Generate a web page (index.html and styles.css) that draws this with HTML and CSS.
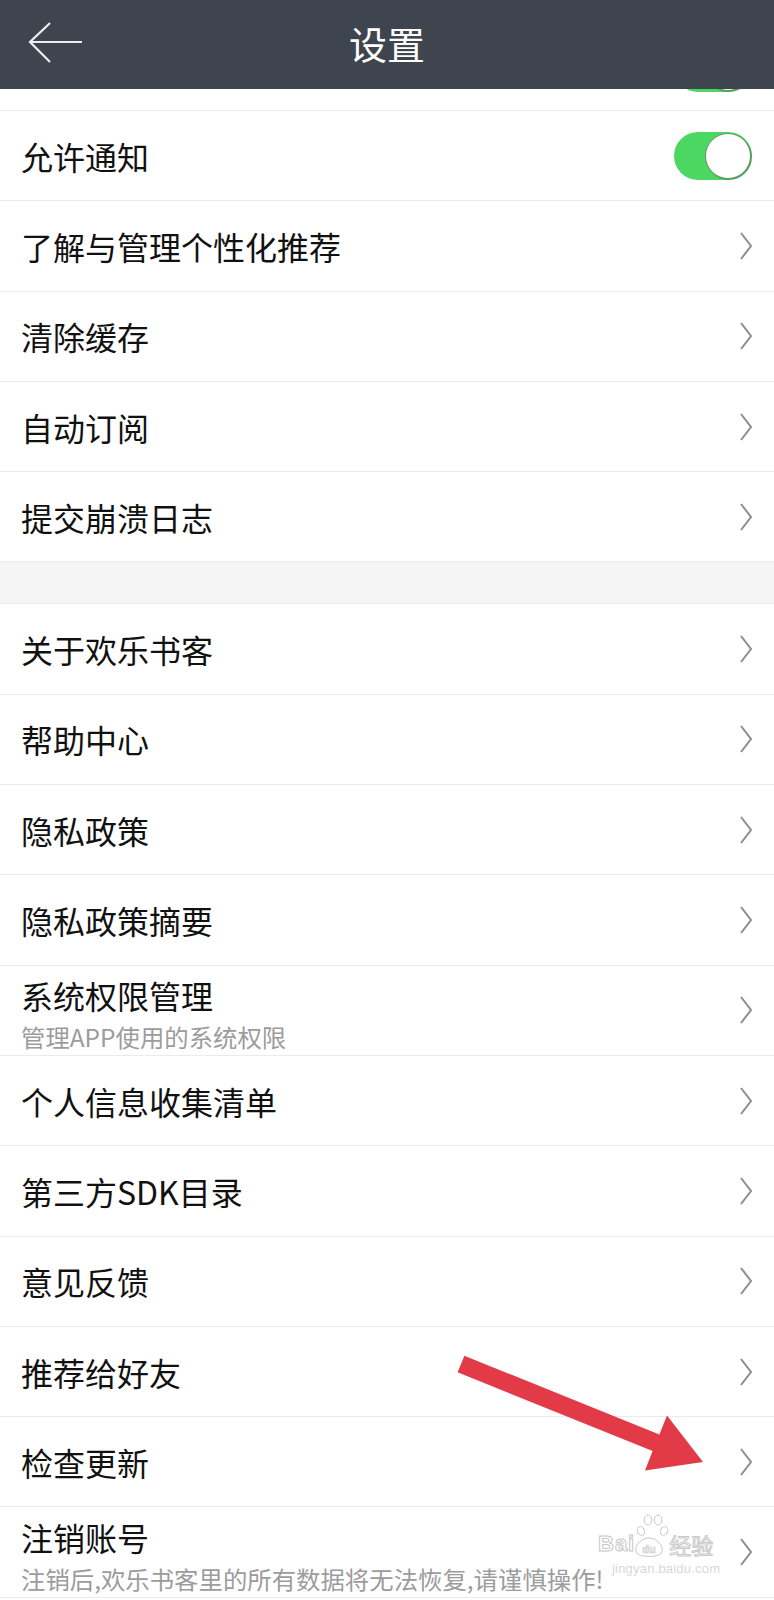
FILE: index.html
```html
<!DOCTYPE html>
<html>
<head>
    <meta charset="utf-8">
    <title>设置</title>
    <link rel="stylesheet" href="styles.css">
</head>
<body>
    <svg class="defs" width="0" height="0">
        <symbol id="chev" viewBox="0 0 14 28">
            <path d="M2 1 L12 14 L2 27" />
        </symbol>
    </svg>

    <header class="topbar">
        <svg class="back" width="56" height="42" viewBox="0 0 56 42">
            <path d="M22 1 L2 20 L22 40 M2 20 H54" />
        </svg>
        <h1>设置</h1>
        <span></span>
    </header>

    <ul class="list">
        <li class="item item--cut"><span></span><span class="switch"></span></li>
        <li class="item"><span class="label">允许通知</span><span class="switch"></span></li>
        <li class="item"><span class="label">了解与管理个性化推荐</span><svg class="chev"><use href="#chev"/></svg></li>
        <li class="item"><span class="label">清除缓存</span><svg class="chev"><use href="#chev"/></svg></li>
        <li class="item"><span class="label">自动订阅</span><svg class="chev"><use href="#chev"/></svg></li>
        <li class="item"><span class="label">提交崩溃日志</span><svg class="chev"><use href="#chev"/></svg></li>
    </ul>

    <div class="gap"></div>

    <ul class="list">
        <li class="item"><span class="label">关于欢乐书客</span><svg class="chev"><use href="#chev"/></svg></li>
        <li class="item"><span class="label">帮助中心</span><svg class="chev"><use href="#chev"/></svg></li>
        <li class="item"><span class="label">隐私政策</span><svg class="chev"><use href="#chev"/></svg></li>
        <li class="item"><span class="label">隐私政策摘要</span><svg class="chev"><use href="#chev"/></svg></li>
        <li class="item item--sub">
            <div class="label">
                <div class="title">系统权限管理</div>
                <div class="sub">管理APP使用的系统权限</div>
            </div>
            <svg class="chev"><use href="#chev"/></svg>
        </li>
        <li class="item"><span class="label">个人信息收集清单</span><svg class="chev"><use href="#chev"/></svg></li>
        <li class="item"><span class="label">第三方SDK目录</span><svg class="chev"><use href="#chev"/></svg></li>
        <li class="item"><span class="label">意见反馈</span><svg class="chev"><use href="#chev"/></svg></li>
        <li class="item"><span class="label">推荐给好友</span><svg class="chev"><use href="#chev"/></svg></li>
        <li class="item"><span class="label">检查更新</span><svg class="chev"><use href="#chev"/></svg></li>
        <li class="item item--sub">
            <div class="label">
                <div class="title">注销账号</div>
                <div class="sub">注销后,欢乐书客里的所有数据将无法恢复,请谨慎操作!</div>
            </div>
            <svg class="chev"><use href="#chev"/></svg>
        </li>
    </ul>

    <!-- annotation arrow drawn over the screenshot -->
    <svg class="pointer" width="774" height="1600" viewBox="0 0 774 1600">
        <polygon points="464.4,1355.7 659.4,1434.5 667,1415.5 703,1462 645,1470.5 652.6,1451.1 457.6,1372.3" />
    </svg>

    <div class="watermark">
        <div class="wm-logo">
            <span class="wm-bai">Bai</span>
            <svg class="wm-paw" width="36" height="46" viewBox="0 0 36 46">
                <ellipse cx="8" cy="19" rx="3.5" ry="4.5" transform="rotate(-25 8 19)" />
                <ellipse cx="15" cy="8" rx="3.8" ry="5" />
                <ellipse cx="25" cy="8" rx="3.8" ry="5" />
                <ellipse cx="31" cy="19" rx="3.5" ry="4.5" transform="rotate(25 31 19)" />
                <path d="M3 40 C1 32 10 26 16 26 C23 26 31 33 29 40 C27 46 5 46 3 40 Z" />
                <text x="16" y="41" text-anchor="middle">du</text>
            </svg>
            <span class="wm-jy">经验</span>
        </div>
        <div class="wm-url">jingyan.baidu.com</div>
    </div>
</body>
</html>
```

FILE: styles.css
```css
body {
    margin: 0;
    position: relative;
    background-color: #ffffff;
    font-family: "Noto Sans CJK SC", "Noto Sans", sans-serif;
    color: #111111;
}

.defs {
    position: absolute;
}

.topbar {
    display: grid;
    grid-template-columns: 1fr auto 1fr;
    align-items: center;
    height: 89px;
    background-color: #3e454e;
}

.back {
    margin-left: 28px;
    margin-top: -3px;
    fill: none;
    stroke: #eeeeee;
    stroke-width: 2.2;
}

.topbar h1 {
    margin: 0;
    margin-top: -4px;
    font-size: 38px;
    font-weight: normal;
    color: #ffffff;
}

.list {
    list-style: none;
    margin: 0;
    padding: 0;
}

.item {
    display: flex;
    align-items: center;
    justify-content: space-between;
    box-sizing: border-box;
    height: 90.3px;
    padding: 0 21px 0 21px;
    border-bottom: 1px solid #ebebeb;
    font-size: 32px;
}

.item--cut {
    height: 22px;
    align-items: flex-start;
    overflow: hidden;
}

.item--cut .switch {
    margin-top: -45px;
}

.label {
    white-space: nowrap;
}

.item--sub .label {
    padding-top: 8px;
}

.title {
    line-height: 38px;
}

.sub {
    margin-top: 8px;
    font-size: 24.4px;
    line-height: 30px;
    color: #9c9c9c;
}

.chev {
    width: 14px;
    height: 28px;
    fill: none;
    stroke: #8c8c8c;
    stroke-width: 2;
}

.switch {
    position: relative;
    width: 78px;
    height: 48px;
    margin-right: 1px;
    border-radius: 24px;
    background-color: #4cd763;
}

.switch::after {
    content: "";
    position: absolute;
    top: 1px;
    right: 1px;
    width: 44px;
    height: 44px;
    border-radius: 50%;
    background-color: #ffffff;
    border: 1px solid #6d8f6f;
    box-shadow: 1px 1px 1px rgba(0, 0, 0, 0.25);
}

.gap {
    height: 41px;
    background-color: #f5f5f5;
    border-bottom: 1px solid #ebebeb;
}

.pointer {
    position: absolute;
    top: 0;
    left: 0;
    pointer-events: none;
    fill: #e23b47;
}

.watermark {
    position: absolute;
    left: 598px;
    top: 1512px;
    width: 136px;
}

.wm-logo {
    display: flex;
    align-items: flex-end;
    height: 46px;
}

.wm-bai {
    font-family: "Liberation Sans", sans-serif;
    font-weight: bold;
    font-size: 22px;
    line-height: 22px;
    margin-bottom: 3px;
    color: #ffffff;
    -webkit-text-stroke: 1px #c8c8c8;
    letter-spacing: 1px;
}

.wm-paw {
    flex: none;
    margin-left: -2px;
    fill: #ffffff;
    stroke: #c8c8c8;
    stroke-width: 1;
}

.wm-paw text {
    font-family: "Liberation Sans", sans-serif;
    font-size: 11px;
    font-weight: bold;
    stroke-width: 0.7;
}

.wm-jy {
    font-size: 22px;
    line-height: 26px;
    margin-bottom: 1px;
    color: #ffffff;
    -webkit-text-stroke: 1px #c8c8c8;
}

.wm-url {
    margin-top: 4px;
    margin-left: 14px;
    font-family: "Liberation Sans", sans-serif;
    font-size: 13px;
    line-height: 13px;
    color: #d8d8d8;
    letter-spacing: 0.2px;
}
```
